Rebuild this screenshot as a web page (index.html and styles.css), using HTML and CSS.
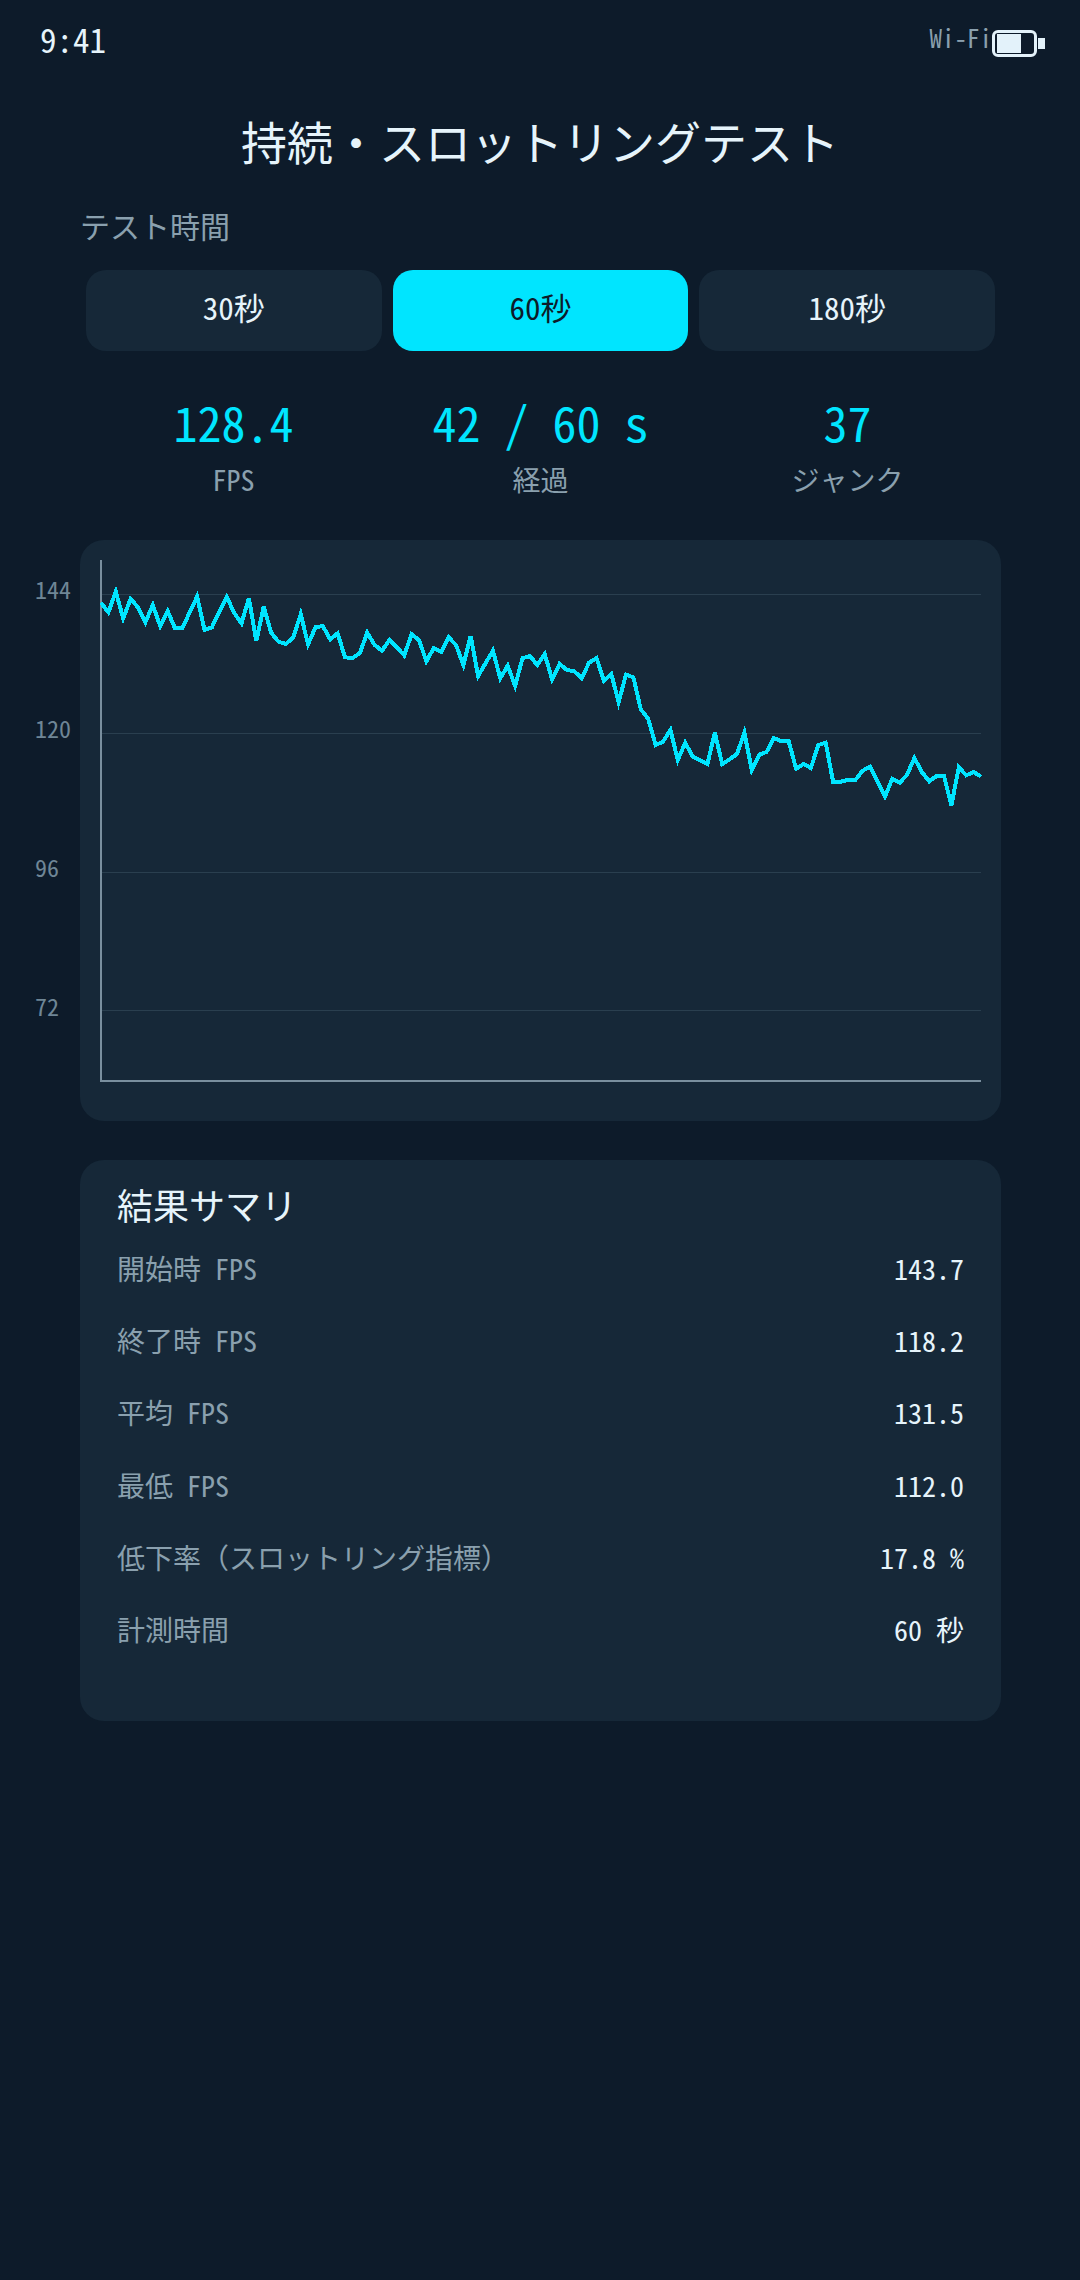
FILE: index.html
```html
<!DOCTYPE html>
<html lang="ja">
<head>
    <meta charset="UTF-8">
    <meta name="viewport" content="width=device-width, initial-scale=1.0">
    <title>持続・スロットリングテスト</title>
    <link rel="stylesheet" href="styles.css">
</head>
<body>
    <header class="status-bar">
        <span class="clock">9:41</span>
        <div class="status-icons">
            <span class="wifi">Wi-Fi</span>
            <div class="battery"><div class="battery-level"></div></div>
            <div class="battery-tip"></div>
        </div>
    </header>

    <h1 class="page-title">持続・スロットリングテスト</h1>

    <p class="field-label">テスト時間</p>
    <div class="segments">
        <button class="segment">30秒</button>
        <button class="segment active">60秒</button>
        <button class="segment">180秒</button>
    </div>

    <section class="stats">
        <div class="stat">
            <div class="stat-value">128.4</div>
            <div class="stat-label">FPS</div>
        </div>
        <div class="stat">
            <div class="stat-value">42 / 60 s</div>
            <div class="stat-label">経過</div>
        </div>
        <div class="stat">
            <div class="stat-value">37</div>
            <div class="stat-label">ジャンク</div>
        </div>
    </section>

    <section class="card chart-card">
        <!-- viewBox は画面座標のまま。Y軸ラベルはカードの外にはみ出す -->
        <svg class="chart" viewBox="80 540 921 581">
            <g class="grid">
                <line x1="100" y1="594.5" x2="981" y2="594.5"></line>
                <line x1="100" y1="733.5" x2="981" y2="733.5"></line>
                <line x1="100" y1="872.5" x2="981" y2="872.5"></line>
                <line x1="100" y1="1010.5" x2="981" y2="1010.5"></line>
            </g>
            <g class="axis">
                <line x1="101" y1="560" x2="101" y2="1082"></line>
                <line x1="100" y1="1081" x2="981" y2="1081"></line>
            </g>
            <g class="y-labels">
                <text x="35" y="599">144</text>
                <text x="35" y="738">120</text>
                <text x="35" y="877">96</text>
                <text x="35" y="1016">72</text>
            </g>
            <polyline id="fps-line" class="fps-line"></polyline>
        </svg>
    </section>

    <section class="card summary">
        <h2 class="summary-title">結果サマリ</h2>
        <div class="row"><span class="row-label">開始時 FPS</span><span class="row-value">143.7</span></div>
        <div class="row"><span class="row-label">終了時 FPS</span><span class="row-value">118.2</span></div>
        <div class="row"><span class="row-label">平均 FPS</span><span class="row-value">131.5</span></div>
        <div class="row"><span class="row-label">最低 FPS</span><span class="row-value">112.0</span></div>
        <div class="row"><span class="row-label">低下率（スロットリング指標）</span><span class="row-value">17.8 %</span></div>
        <div class="row"><span class="row-label">計測時間</span><span class="row-value">60 秒</span></div>
    </section>

    <script>
        // FPSの折れ線 (サンプルごとの高さ、3倍スケールの値)
        const samples = [
            218, 247, 185, 265, 207, 232, 277, 225, 288, 243,
            294, 294, 247, 200, 300, 292, 245, 200, 248, 280,
            205, 333, 230, 308, 335, 342, 322, 253, 343, 292,
            288, 328, 310, 382, 384, 370, 308, 345, 362, 330,
            352, 376, 313, 330, 394, 354, 365, 322, 345, 405,
            318, 438, 400, 362, 445, 407, 468, 385, 378, 405,
            372, 448, 402, 420, 424, 444, 398, 384, 452, 432,
            516, 434, 442, 538, 566, 645, 635, 600, 690, 638,
            680, 690, 702, 608, 702, 688, 672, 608, 720, 674,
            666, 624, 634, 634, 716, 702, 714, 645, 638, 755,
            755, 750, 750, 722, 710, 755, 800, 746, 758, 734,
            684, 726, 754, 738, 738, 826, 712, 736, 726, 740
        ];
        const points = samples.map((v, i) => {
            const x = 101 + i * 880 / (samples.length - 1);
            const y = 530 + v / 3;
            return x.toFixed(1) + ',' + y.toFixed(1);
        });
        document.getElementById('fps-line').setAttribute('points', points.join(' '));
    </script>
</body>
</html>
```

FILE: styles.css
```css
* {
    box-sizing: border-box;
}
body {
    margin: 0;
    height: 2280px;
    background-color: #0d1b2a;
    color: #e6f4fb;
    font-family: "Noto Sans Mono CJK JP", "Noto Sans CJK JP", monospace;
    font-weight: 300;
}
.status-bar {
    display: flex;
    justify-content: space-between;
    padding: 19px 35px 0 40px;
    height: 110px;
}
.clock {
    font-size: 33px;
    line-height: 40px;
}
.status-icons {
    display: flex;
    align-items: flex-start;
}
.wifi {
    font-size: 25px;
    line-height: 34px;
    color: #8aa0ae;
    margin-top: 1px;
}
.battery {
    width: 45px;
    height: 27px;
    margin-top: 11px;
    padding: 1px 2px;
    border: 3px solid #e3f2fa;
    border-radius: 6px;
}
.battery-level {
    width: 24px;
    height: 100%;
    background-color: #e3f2fa;
}
.battery-tip {
    width: 7px;
    height: 11px;
    margin-top: 19px;
    margin-left: 1px;
    background-color: #e3f2fa;
}
.page-title {
    margin: 0;
    font-size: 46px;
    font-weight: 300;
    line-height: 60px;
    text-align: center;
}
.field-label {
    margin: 33px 0 0 80px;
    font-size: 30px;
    line-height: 44px;
    color: #8aa0ae;
}
.segments {
    display: flex;
    gap: 11px;
    margin: 23px 85px 0 86px;
}
.segment {
    flex: 1;
    height: 81px;
    padding: 0 0 8px;
    border: none;
    border-radius: 20px;
    background-color: #162838;
    color: #e6f4fb;
    font-family: inherit;
    font-weight: inherit;
    font-size: 31px;
}
.segment.active {
    background-color: #00e5ff;
    color: #0d1b2a;
}
.stats {
    display: flex;
    margin: 38px 79px 0 80px;
}
.stat {
    flex: 1;
    text-align: center;
}
.stat-value {
    font-size: 48px;
    line-height: 64px;
    color: #00e5ff;
}
.stat-label {
    margin-top: 6px;
    font-size: 28px;
    line-height: 40px;
    color: #8aa0ae;
}
.card {
    margin: 0 79px 0 80px;
    background-color: #162838;
    border-radius: 24px;
}
.chart-card {
    height: 581px;
    margin-top: 41px;
}
.chart {
    display: block;
    width: 921px;
    height: 581px;
    overflow: visible;
}
.grid line {
    stroke: #2a3f4f;
    stroke-width: 1;
}
.axis line {
    stroke: #7a8f9e;
    stroke-width: 2;
}
.y-labels text {
    font-size: 24px;
    fill: #6f8696;
}
.fps-line {
    fill: none;
    stroke: #00e5ff;
    stroke-width: 4;
    shape-rendering: crispEdges;
}
.summary {
    height: 561px;
    margin-top: 39px;
    padding: 20px 37px 0;
}
.summary-title {
    margin: 0 0 4px;
    font-size: 36px;
    font-weight: 300;
    line-height: 48px;
}
.row {
    display: flex;
    justify-content: space-between;
    align-items: center;
    height: 72.2px;
    font-size: 28px;
}
.row-label {
    color: #8aa0ae;
}
.row-value {
    color: #e6f4fb;
}
```
